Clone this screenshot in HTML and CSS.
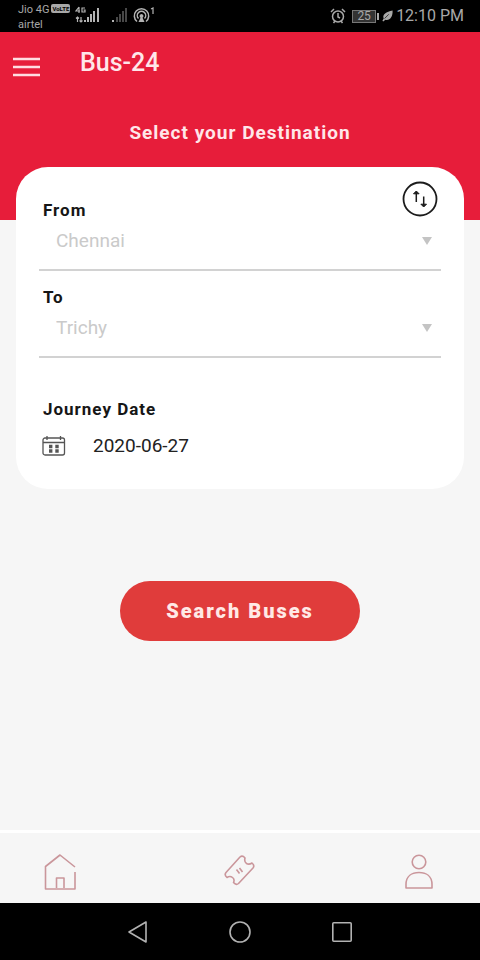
FILE: index.html
```html
<!DOCTYPE html>
<html lang="en">
<head>
<meta charset="utf-8">
<meta name="viewport" content="width=device-width, initial-scale=1">
<title>Bus-24</title>
<link rel="stylesheet" href="styles.css">
</head>
<body>
<div class="status">
  <div class="carrier"><div class="carrier-line">Jio 4G <span class="volte">VoLTE</span></div><div class="carrier-line">airtel</div></div>
  <svg class="signal" width="82" height="20" viewBox="0 0 82 20" aria-hidden="true">
    <g fill="none" stroke="#b4b4b4" stroke-width="1.2">
      <path d="M4 1L1 5H5M4 1V7M10 2H7V6H10V4H8.500M2.500 16V11M1 12.500L2.500 11L4 12.500M6 11V16M4.500 14.500L6 16L7.500 14.500"/>
      <path stroke-width="2" d="M10 16V14M13 16V11M16 16V8M19 16V5M23 16V2"/>
      <path stroke-width="2" d="M38 16V14"/>
      <path stroke="#484848" stroke-width="2" d="M42 16V11M45 16V8M48 16V5M51 16V2"/>
      <path stroke-width="1.500" d="M62 15.500A7.200 7.200 0 1 1 71 15.500M63.500 12.500A4.200 4.200 0 1 1 69.500 12.500"/>
      <path d="M76 3L78 2V8"/>
    </g>
    <path fill="#b4b4b4" d="M66.500 8a2 2 0 0 1 1 3.700l2 4.300h-6l2-4.300A2 2 0 0 1 66.500 8z"/>
  </svg>
  <div class="status-right">
    <svg width="16" height="16" viewBox="0 0 16 16" fill="none" stroke="#a8a8a8" stroke-width="1.500" aria-hidden="true"><circle cx="8" cy="8.500" r="5.500"/><path d="M1 4L4 1M15 4L12 1M3.500 15L5 13M12.500 15L11 13M8 5V9L10 10"/></svg>
    <span class="battery">25</span>
    <svg width="11" height="12" viewBox="0 0 13 14" aria-hidden="true"><path fill="#a8a8a8" d="M12.500 .5C13 8 9 13 4 11.500L1.500 13.500L.5 12.500L2 10C0 5 5 2 12.500 .5z"/><path d="M3 10L8 5" stroke="#000" stroke-width=".8"/></svg>
    <span class="clock">12:10 PM</span>
  </div>
</div>
<header class="hero">
  <div class="bar">
    <button class="menu" aria-label="Menu"><svg width="28" height="20" viewBox="0 0 28 20" aria-hidden="true"><path d="M0 2H27M0 10H27M0 18H27" stroke="#ffdce1" stroke-width="2.600"/></svg></button>
    <h1>Bus-24</h1>
  </div>
  <h2>Select your Destination</h2>
</header>
<main>
  <form class="card">
    <button class="swap" type="button" aria-label="Swap"><svg width="36" height="36" viewBox="0 0 36 36" fill="none" stroke="#1c1c1c" aria-hidden="true"><circle cx="18" cy="18" r="16.500" stroke-width="1.800"/><path stroke-width="1.500" d="M14.300 21V12M21.700 15.500V24"/><path fill="#1c1c1c" stroke-width="1" d="M11.500 12.800L14.300 10L17.100 12.800zM18.900 23.200L21.700 26L24.500 23.200z"/></svg></button>
    <div class="field">
      <label for="from">From</label>
      <div class="pick"><select id="from"><option>Chennai</option></select><span class="caret" aria-hidden="true"></span></div>
    </div>
    <div class="field">
      <label for="to">To</label>
      <div class="pick"><select id="to"><option>Trichy</option></select><span class="caret" aria-hidden="true"></span></div>
    </div>
    <div class="date">
      <label for="date">Journey Date</label>
      <div class="date-row">
        <svg width="24" height="20" viewBox="0 0 24 20" fill="none" stroke="#555" stroke-width="1.300" aria-hidden="true"><rect x="1" y="2" width="21.500" height="17" rx="2"/><path d="M1 6.500H22.500M5 0V4M18.500 0V4"/><path stroke-width="3.400" d="M7 10.500H10.400M13.300 10.500H16.700M7 15H10.400M13.300 15H16.700"/></svg>
        <input id="date" type="text" value="2020-06-27">
      </div>
    </div>
  </form>
  <button class="search">Search Buses</button>
</main>
<nav class="tabs">
  <a href="#" aria-label="Home"><svg width="34" height="40" viewBox="0 0 34 40" aria-hidden="true"><path d="M31 16L16 4L1.500 15.500V38H31V21M12.500 37V27H20V37"/></svg></a>
  <a href="#" aria-label="Tickets"><svg width="34" height="34" viewBox="0 0 34 34" aria-hidden="true"><path d="M3 18.500L17 3Q19.500 1 22 4Q21 8 23.500 9.500Q26 11 29 9Q32 11.500 30 14L15.500 29.500Q13 31.500 10.500 28.500Q12 25.500 9.500 23.500Q7 21.500 4 23.500Q1 21 3 18.500z"/><path d="M13.500 15.500L16.500 19.500M16.500 14L19.500 18"/></svg></a>
  <a href="#" aria-label="Profile"><svg width="34" height="40" viewBox="0 0 34 40" aria-hidden="true"><circle cx="17" cy="11" r="6.800"/><path d="M4 37V33.500C4 25 10 21.500 17 21.500S30 25 30 33.500V37z"/></svg></a>
</nav>
<div class="system">
  <button aria-label="Back"><svg width="24" height="24" viewBox="0 0 24 24" aria-hidden="true"><path d="M20 2V22L3 12z"/></svg></button>
  <button aria-label="Home screen"><svg width="24" height="24" viewBox="0 0 24 24" aria-hidden="true"><circle cx="12" cy="12" r="10"/></svg></button>
  <button aria-label="Recent apps"><svg width="24" height="24" viewBox="0 0 24 24" aria-hidden="true"><rect x="2.800" y="2.800" width="18.400" height="18.400" rx="1"/></svg></button>
</div>
</body>
</html>
```
FILE: styles.css
```css
* { box-sizing: border-box; }
body {
  margin: 0;
  min-height: 100vh;
  display: flex;
  flex-direction: column;
  background: #f6f6f6;
  color: #161616;
  font-family: Roboto, "Liberation Sans", sans-serif;
}
button { padding: 0; border: 0; background: none; font-family: inherit; }
svg { display: block; }
h1, h2 { margin: 0; }

.status {
  height: 32px;
  padding: 0 16px 0 18px;
  display: flex;
  align-items: center;
  background: #000;
  color: #a8a8a8;
}
.carrier { padding-top: 2px; font-size: 11px; }
.carrier-line { display: flex; gap: 2px; line-height: 15px; }
.volte {
  height: 9px;
  margin-top: 2px;
  padding: 0 1px;
  border-radius: 2px;
  background: #a8a8a8;
  color: #000;
  font-size: 6px;
  font-weight: 700;
  line-height: 9px;
}
.signal { margin-left: 5px; }
.status-right { margin-left: auto; display: flex; align-items: center; gap: 3px; }
.battery {
  position: relative;
  width: 24px;
  margin: 0 3px;
  border: 1px solid #777;
  background: #333;
  font-size: 12px;
  line-height: 11px;
  text-align: center;
}
.battery::after {
  content: "";
  position: absolute;
  right: -4px;
  top: 2px;
  width: 2px;
  height: 7px;
  background: #a8a8a8;
}
.clock { font-size: 16px; line-height: 32px; }

.hero { height: 188px; background: #e71d3a; color: #ffe6e9; }
.bar { display: flex; padding: 14px 13px 0; }
.menu { height: 42px; margin-right: 39px; }
h1 { font-size: 25px; font-weight: 500; line-height: 34px; }
h2 { margin-top: 33px; font-size: 19px; font-weight: 700; line-height: 24px; letter-spacing: 1px; text-align: center; }

main { flex: 1; padding: 0 16px; }
.card {
  position: relative;
  margin-top: -53px;
  padding: 17px 23px 28px;
  border-radius: 32px;
  background: #fff;
}
.swap { position: absolute; top: 14px; right: 26px; }
.field { padding: 14px 0 9px; border-bottom: 2px solid #d2d2d2; }
label { display: block; padding-left: 4px; font-size: 17px; font-weight: 700; line-height: 24px; letter-spacing: 1px; }
.pick { display: flex; align-items: center; height: 38px; padding: 0 9px 0 17px; }
select {
  flex: 1;
  padding: 0;
  border: 0;
  appearance: none;
  background: none;
  color: #cacaca;
  font: 19px/24px Roboto, sans-serif;
}
.caret { border: 5px solid transparent; border-top: 8px solid #c4c4c4; border-bottom: 0; }
.date { padding-top: 39px; }
.date-row { display: flex; align-items: center; height: 30px; margin-top: 10px; padding-left: 3px; }
.date-row input {
  flex: 1;
  min-width: 0;
  margin-left: 27px;
  padding: 0;
  border: 0;
  background: none;
  color: #222;
  font: 19px/24px Roboto, sans-serif;
}
.search {
  display: block;
  width: 240px;
  height: 60px;
  margin: 92px auto 32px;
  border-radius: 30px;
  background: #e03c3b;
  color: #ffe9e6;
  font-size: 20px;
  font-weight: 900;
  letter-spacing: 2px;
}

.tabs {
  display: flex;
  align-items: center;
  justify-content: space-between;
  height: 73px;
  padding: 6px 44px 0;
  border-top: 3px solid #fff;
}
.tabs svg { fill: none; stroke: #ca969b; stroke-width: 1.6; stroke-linejoin: round; }
.system { display: flex; justify-content: center; align-items: center; gap: 78px; height: 57px; background: #000; }
.system svg { fill: none; stroke: #b2b2b2; stroke-width: 1.6; stroke-linejoin: round; }
```
